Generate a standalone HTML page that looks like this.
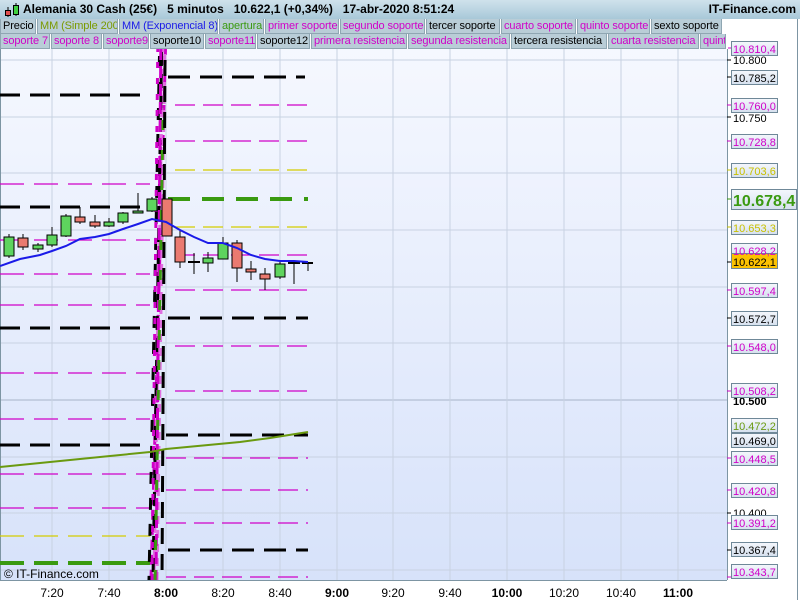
<!DOCTYPE html>
<html><head><meta charset="utf-8"><style>
*{margin:0;padding:0;box-sizing:border-box}
body{width:800px;height:600px;overflow:hidden;background:#fff;font-family:"Liberation Sans",sans-serif;position:relative}
#title{position:absolute;left:0;top:0;width:800px;height:19px;background:linear-gradient(#cfe2ec,#a8c8d8);font-size:12px;font-weight:bold;line-height:19px}
.row{position:absolute;left:0;height:15px;display:flex;font-size:11px;line-height:14px;background:#fff;letter-spacing:-0.1px}
.row span{display:block;height:15px;background:#b9cdd7;border:1px solid #8fa6b2;border-top:none;padding-left:2px;white-space:nowrap;overflow:hidden;margin-right:1px}
.m{color:#d000c8}.k{color:#000}
svg{position:absolute;left:0;top:0}
</style></head><body>
<svg width="800" height="600" font-family="Liberation Sans, sans-serif">
<defs><linearGradient id="bg" x1="0" y1="0" x2="0" y2="1"><stop offset="0" stop-color="#f7f9ff"/><stop offset="1" stop-color="#d7e2fa"/></linearGradient>
<linearGradient id="lb" x1="0" y1="0" x2="0" y2="1"><stop offset="0" stop-color="#f4f7fc"/><stop offset="1" stop-color="#d5e0ee"/></linearGradient></defs>
<rect x="0" y="19" width="727" height="561" fill="url(#bg)"/>
<g stroke="#c8d2e2" stroke-width="1">
<line x1="0" x2="727" y1="60" y2="60"/><line x1="0" x2="727" y1="117" y2="117"/><line x1="0" x2="727" y1="173" y2="173"/><line x1="0" x2="727" y1="230" y2="230"/><line x1="0" x2="727" y1="287" y2="287"/><line x1="0" x2="727" y1="343" y2="343"/><line x1="0" x2="727" y1="400" y2="400" stroke="#a8b4c8"/><line x1="0" x2="727" y1="457" y2="457"/><line x1="0" x2="727" y1="513" y2="513"/><line x1="0" x2="727" y1="570" y2="570"/>
<line x1="52" x2="52" y1="49" y2="580"/><line x1="109" x2="109" y1="49" y2="580"/><line x1="166" x2="166" y1="49" y2="580"/><line x1="223" x2="223" y1="49" y2="580"/><line x1="280" x2="280" y1="49" y2="580"/><line x1="337" x2="337" y1="49" y2="580"/><line x1="393" x2="393" y1="49" y2="580"/><line x1="450" x2="450" y1="49" y2="580"/><line x1="507" x2="507" y1="49" y2="580"/><line x1="564" x2="564" y1="49" y2="580"/><line x1="621" x2="621" y1="49" y2="580"/><line x1="678" x2="678" y1="49" y2="580"/>
</g>
<line x1="0.5" x2="0.5" y1="19" y2="580" stroke="#7d95a3"/>
<g fill="none">
<g stroke="#000" stroke-width="3" stroke-dasharray="20 10"><line x1="0" x2="150" y1="95" y2="95"/><line x1="0" x2="150" y1="207" y2="207"/><line x1="0" x2="150" y1="328" y2="328"/><line x1="0" x2="150" y1="445" y2="445"/></g>
<g stroke="#d000c8" stroke-width="1.3" stroke-dasharray="24 10"><line x1="0" x2="150" y1="184" y2="184"/><line x1="0" x2="150" y1="240" y2="240"/><line x1="0" x2="150" y1="274" y2="274"/><line x1="0" x2="150" y1="305" y2="305"/><line x1="0" x2="150" y1="373" y2="373"/><line x1="0" x2="150" y1="419" y2="419"/><line x1="0" x2="150" y1="474" y2="474"/><line x1="0" x2="150" y1="508" y2="508"/></g>
<line x1="0" x2="150" y1="536" y2="536" stroke="#d4cc00" stroke-width="1.3" stroke-dasharray="24 10"/>
<line x1="0" x2="150" y1="563" y2="563" stroke="#3a9a10" stroke-width="4" stroke-dasharray="24 10"/>
<g stroke="#000" stroke-width="3" stroke-dasharray="22 10"><line x1="168" x2="305" y1="77" y2="77"/><line x1="168" x2="308" y1="318" y2="318"/><line x1="166" x2="308" y1="435" y2="435"/><line x1="168" x2="308" y1="550" y2="550"/></g>
<g stroke="#d000c8" stroke-width="1.3" stroke-dasharray="20 8"><line x1="168" x2="308" y1="48" y2="48"/><line x1="175" x2="308" y1="105" y2="105"/><line x1="175" x2="308" y1="141" y2="141"/><line x1="175" x2="308" y1="255" y2="255"/><line x1="175" x2="308" y1="290" y2="290"/><line x1="175" x2="308" y1="346" y2="346"/><line x1="175" x2="308" y1="391" y2="391"/><line x1="166" x2="308" y1="458" y2="458"/><line x1="166" x2="308" y1="490" y2="490"/><line x1="166" x2="308" y1="523" y2="523"/><line x1="166" x2="308" y1="577" y2="577"/></g>
<g stroke="#d4cc00" stroke-width="1.3" stroke-dasharray="20 8"><line x1="175" x2="308" y1="170" y2="170"/><line x1="175" x2="308" y1="227" y2="227"/></g>
<line x1="168" x2="308" y1="199" y2="199" stroke="#3a9a10" stroke-width="4" stroke-dasharray="22 12"/>
<g stroke-width="3">
<line x1="166" y1="30" x2="151" y2="580" stroke="#d000c8" stroke-dasharray="10 5"/>
<line x1="163" y1="30" x2="154" y2="580" stroke="#e070e0" stroke-dasharray="9 4"/>
<line x1="162" y1="30" x2="153" y2="580" stroke="#000" stroke-dasharray="14 8"/>
<line x1="165" y1="40" x2="157" y2="580" stroke="#e070e0" stroke-dasharray="8 6"/>
<line x1="160" y1="30" x2="149" y2="580" stroke="#000" stroke-dasharray="12 14"/>
<line x1="161" y1="30" x2="156" y2="580" stroke="#d000c8" stroke-dasharray="12 6"/>
<line x1="163" y1="120" x2="155" y2="580" stroke="#3a9a10" stroke-dasharray="10 20"/>
<line x1="165" y1="60" x2="162" y2="580" stroke="#000" stroke-dasharray="16 10"/>
<line x1="158" y1="30" x2="152" y2="580" stroke="#d000c8" stroke-dasharray="6 10"/>
</g>
</g>
<g stroke="#000" stroke-width="1">
<line x1="9" x2="9" y1="234" y2="258"/><rect x="4" y="237" width="10" height="19" fill="#5ed45e"/>
<line x1="23" x2="23" y1="234" y2="250"/><rect x="18" y="238" width="10" height="9" fill="#ea7a70"/>
<line x1="38" x2="38" y1="243" y2="252"/><rect x="33" y="245" width="10" height="4" fill="#5ed45e"/>
<line x1="52" x2="52" y1="227" y2="247"/><rect x="47" y="235" width="10" height="10" fill="#5ed45e"/>
<line x1="66" x2="66" y1="214" y2="237"/><rect x="61" y="216" width="10" height="20" fill="#5ed45e"/>
<line x1="80" x2="80" y1="207" y2="224"/><rect x="75" y="217" width="10" height="5" fill="#ea7a70"/>
<line x1="95" x2="95" y1="215" y2="228"/><rect x="90" y="222" width="10" height="4" fill="#ea7a70"/>
<line x1="109" x2="109" y1="218" y2="227"/><rect x="104" y="222" width="10" height="4" fill="#5ed45e"/>
<line x1="123" x2="123" y1="212" y2="224"/><rect x="118" y="213" width="10" height="9" fill="#5ed45e"/>
<line x1="138" x2="138" y1="193" y2="213"/><rect x="133" y="211" width="10" height="2" fill="#5ed45e"/>
<line x1="152" x2="152" y1="197" y2="212"/><rect x="147" y="199" width="10" height="12" fill="#5ed45e"/>
<rect x="162" y="199" width="10" height="37" fill="#ea7a70"/>
<line x1="180" x2="180" y1="230" y2="268"/><rect x="175" y="237" width="10" height="25" fill="#ea7a70"/>
<line x1="194" x2="194" y1="253" y2="274"/><line x1="188" x2="200" y1="262" y2="262" stroke-width="2"/>
<line x1="208" x2="208" y1="252" y2="272"/><rect x="203" y="258" width="10" height="5" fill="#5ed45e"/>
<line x1="223" x2="223" y1="237" y2="259"/><rect x="218" y="243" width="10" height="16" fill="#5ed45e"/>
<line x1="237" x2="237" y1="240" y2="282"/><rect x="232" y="243" width="10" height="25" fill="#ea7a70"/>
<line x1="251" x2="251" y1="261" y2="280"/><rect x="246" y="269" width="10" height="3" fill="#ea7a70"/>
<line x1="265" x2="265" y1="268" y2="290"/><rect x="260" y="274" width="10" height="5" fill="#ea7a70"/>
<line x1="280" x2="280" y1="262" y2="279"/><rect x="275" y="264" width="10" height="13" fill="#5ed45e"/>
<line x1="294" x2="294" y1="262" y2="284"/><line x1="288" x2="300" y1="263" y2="263" stroke-width="2"/>
<line x1="308" x2="308" y1="262" y2="271"/><line x1="302" x2="313" y1="263" y2="263" stroke-width="2"/>
</g>
<polyline fill="none" stroke="#1a1ae8" stroke-width="2" points="0,266 20,259 40,255 52,251 66,246 80,239 95,237 109,234 123,229 138,224 152,219 166,222 180,230 194,237 208,243 223,243 237,248 251,255 265,259 280,261 294,261 308,262"/>
<polyline fill="none" stroke="#6a9a10" stroke-width="2" points="0,467 50,462 110,456 150,452 166,449 240,442 270,438 308,432"/>
<text x="4" y="578" font-size="12" fill="#000">© IT-Finance.com</text>
<line x1="727.5" x2="727.5" y1="49" y2="580" stroke="#7d95a3"/>
<line x1="0" x2="727" y1="580.5" y2="580.5" stroke="#7d95a3"/>
<line x1="797.5" x2="797.5" y1="19" y2="600" stroke="#7d95a3"/>
<g font-size="11">
<text x="733" y="64">10.800</text><text x="733" y="122">10.750</text><text x="733" y="405" font-weight="bold">10.500</text><text x="733" y="517">10.400</text>
<g stroke="#000"><line x1="727" x2="731" y1="60" y2="60"/><line x1="727" x2="731" y1="117" y2="117"/><line x1="727" x2="731" y1="513" y2="513"/></g>
</g>
<g font-size="11">
<g stroke="#6f8898" fill="url(#lb)">
<rect x="731.5" y="41.5" width="46" height="14"/><rect x="731.5" y="70.5" width="46" height="14"/><rect x="731.5" y="98.5" width="46" height="14"/><rect x="731.5" y="134.5" width="46" height="14"/><rect x="731.5" y="163.5" width="46" height="14"/><rect x="731.5" y="189.5" width="65" height="20"/><rect x="731.5" y="220.5" width="46" height="14"/><rect x="731.5" y="243.5" width="46" height="14"/><rect x="731.5" y="283.5" width="46" height="14"/><rect x="731.5" y="311.5" width="46" height="14"/><rect x="731.5" y="339.5" width="46" height="14"/><rect x="731.5" y="383.5" width="46" height="14"/><rect x="731.5" y="418.5" width="46" height="14"/><rect x="731.5" y="433.5" width="46" height="14"/><rect x="731.5" y="451.5" width="46" height="14"/><rect x="731.5" y="483.5" width="46" height="14"/><rect x="731.5" y="515.5" width="46" height="14"/><rect x="731.5" y="542.5" width="46" height="14"/><rect x="731.5" y="564.5" width="46" height="14"/>
<rect x="731.5" y="253.5" width="46" height="15" fill="#fcc200"/>
</g>
<g stroke-width="1"><line x1="727" x2="731" y1="48" y2="48" stroke="#d000c8"/><line x1="727" x2="731" y1="77" y2="77" stroke="#000"/><line x1="727" x2="731" y1="105" y2="105" stroke="#d000c8"/><line x1="727" x2="731" y1="141" y2="141" stroke="#d000c8"/><line x1="727" x2="731" y1="170" y2="170" stroke="#c8c000"/><line x1="727" x2="731" y1="199" y2="199" stroke="#3a9a10"/><line x1="727" x2="731" y1="227" y2="227" stroke="#c8c000"/><line x1="727" x2="731" y1="262" y2="262" stroke="#000"/><line x1="727" x2="731" y1="290" y2="290" stroke="#d000c8"/><line x1="727" x2="731" y1="318" y2="318" stroke="#000"/><line x1="727" x2="731" y1="346" y2="346" stroke="#d000c8"/><line x1="727" x2="731" y1="391" y2="391" stroke="#d000c8"/><line x1="727" x2="731" y1="458" y2="458" stroke="#d000c8"/><line x1="727" x2="731" y1="490" y2="490" stroke="#d000c8"/><line x1="727" x2="731" y1="523" y2="523" stroke="#d000c8"/><line x1="727" x2="731" y1="550" y2="550" stroke="#000"/><line x1="727" x2="731" y1="577" y2="577" stroke="#d000c8"/></g>
<g fill="#d000c8">
<text x="733" y="53">10.810,4</text><text x="733" y="110">10.760,0</text><text x="733" y="146">10.728,8</text><text x="733" y="255">10.628,2</text><text x="733" y="295">10.597,4</text><text x="733" y="351">10.548,0</text><text x="733" y="395">10.508,2</text><text x="733" y="463">10.448,5</text><text x="733" y="495">10.420,8</text><text x="733" y="527">10.391,2</text><text x="733" y="576">10.343,7</text>
</g>
<g fill="#c8c000"><text x="733" y="175">10.703,6</text><text x="733" y="232">10.653,3</text></g>
<text x="733" y="430" fill="#6a9a10">10.472,2</text>
<text x="733" y="206" fill="#3a9a10" font-size="16" font-weight="bold">10.678,4</text>
<g fill="#000"><text x="733" y="82">10.785,2</text><text x="733" y="323">10.572,7</text><text x="733" y="445">10.469,0</text><text x="733" y="554">10.367,4</text><text x="733" y="266">10.622,1</text></g>
</g>
<g font-size="12" text-anchor="middle">
<text x="52" y="597">7:20</text><text x="109" y="597">7:40</text><text x="166" y="597" font-weight="bold">8:00</text><text x="223" y="597">8:20</text><text x="280" y="597">8:40</text><text x="337" y="597" font-weight="bold">9:00</text><text x="393" y="597">9:20</text><text x="450" y="597">9:40</text><text x="507" y="597" font-weight="bold">10:00</text><text x="564" y="597">10:20</text><text x="621" y="597">10:40</text><text x="678" y="597" font-weight="bold">11:00</text>
</g>
</svg>
<div id="title">
<svg width="18" height="19" style="position:absolute;left:3px;top:0"><line x1="5" y1="7" x2="5" y2="17" stroke="#000"/><rect x="2.5" y="10.5" width="5" height="5" fill="#e05050" stroke="#000"/><line x1="13" y1="3" x2="13" y2="16" stroke="#000"/><rect x="10.5" y="5.5" width="5" height="9" fill="#40d040" stroke="#000"/></svg>
<span style="position:absolute;left:23px">Alemania 30 Cash (25€)&nbsp;&nbsp;&nbsp;5 minutos&nbsp;&nbsp;&nbsp;10.622,1 (+0,34%)&nbsp;&nbsp;&nbsp;17-abr-2020 8:51:24</span>
<span style="position:absolute;right:4px">IT-Finance.com</span>
</div>
<div class="row" style="top:19px;width:728px">
<span class="k" style="width:36px">Precio</span><span style="width:81px;color:#7a9a00">MM (Simple 200)</span><span style="width:99px;color:#1a1ae8">MM (Exponencial 8)</span><span style="width:45px;color:#3a9a10">apertura</span><span class="m" style="width:74px">primer soporte</span><span class="m" style="width:85px">segundo soporte</span><span class="k" style="width:74px">tercer soporte</span><span class="m" style="width:75px">cuarto soporte</span><span class="m" style="width:73px">quinto soporte</span><span class="k" style="width:71px">sexto soporte</span>
</div>
<div class="row" style="top:34px;width:728px">
<span class="m" style="width:50px">soporte 7</span><span class="m" style="width:51px">soporte 8</span><span class="m" style="width:46px">soporte9</span><span class="k" style="width:54px">soporte10</span><span class="m" style="width:51px">soporte11</span><span class="k" style="width:53px">soporte12</span><span class="m" style="width:96px">primera resistencia</span><span class="m" style="width:102px">segunda resistencia</span><span class="k" style="width:96px">tercera resistencia</span><span class="m" style="width:91px">cuarta resistencia</span><span class="m" style="width:26px">quinta</span>
</div>
</body></html>
